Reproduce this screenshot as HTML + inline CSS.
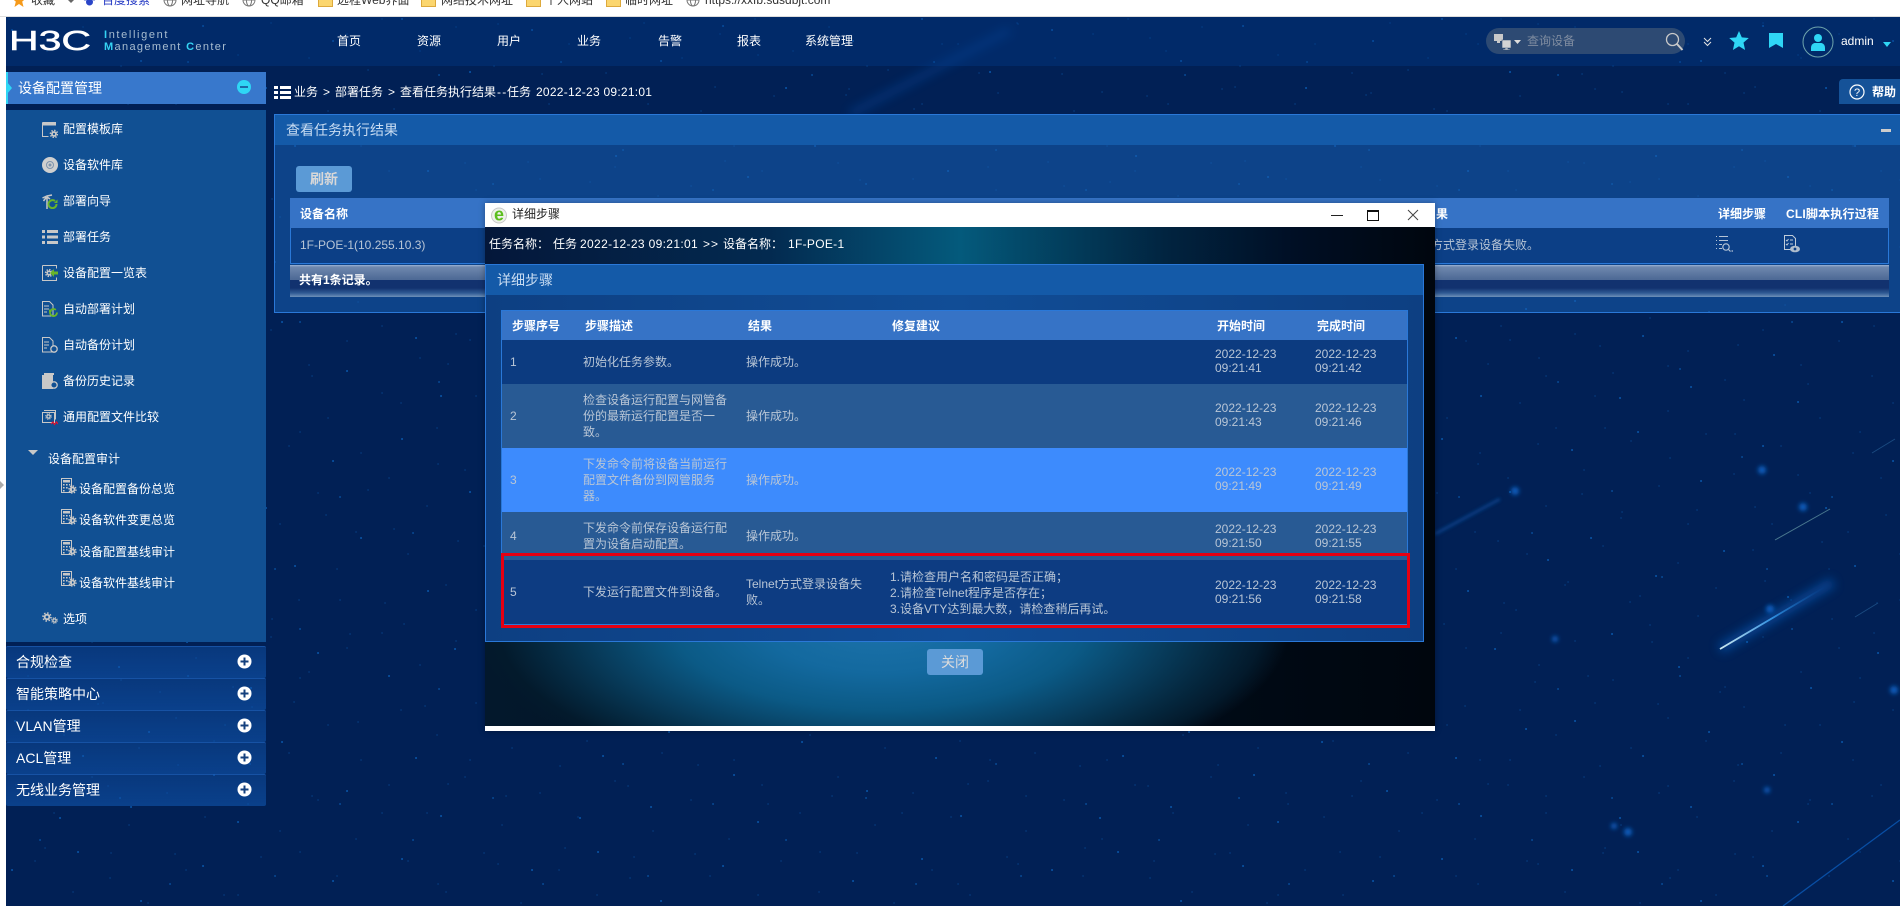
<!DOCTYPE html>
<html lang="zh">
<head>
<meta charset="utf-8">
<title>H3C iMC</title>
<style>
*{box-sizing:border-box;margin:0;padding:0}
html,body{width:1900px;height:906px;overflow:hidden;background:#012055}
body{position:relative;font:12px/16px "Liberation Sans","Noto Sans CJK SC",sans-serif;color:#fff}
.a{position:absolute}
.t{position:absolute;white-space:nowrap;line-height:16px}
.bm{position:absolute;top:-8px;white-space:nowrap;color:#333;line-height:16px}
.nav{position:absolute;top:33px;width:60px;text-align:center;color:#fff}
.side{position:absolute;left:6px;width:260px}
.sub{position:absolute;left:63px;white-space:nowrap;color:#fff}
.sub2{position:absolute;left:79px;white-space:nowrap;color:#fff}
.ic{position:absolute;left:42px;width:16px;height:16px}
.ic2{position:absolute;left:61px;width:16px;height:16px}
.acc{position:absolute;left:6px;width:260px;height:32px;background:linear-gradient(180deg,rgba(20,90,180,.42),rgba(16,86,176,.6));border-top:1px solid rgba(35,100,190,.5);border-radius:2px}
.acc span{position:absolute;left:10px;top:6px;font-size:14px;line-height:18px;color:#fff;white-space:nowrap}
.acc svg{position:absolute;left:231px;top:7px}
.th{position:absolute;font-weight:bold;color:#fff;white-space:nowrap;line-height:16px}
.td{position:absolute;color:#b9c6d6;white-space:nowrap;line-height:16px}
.tm{position:absolute;color:#b9c6d6;white-space:nowrap;line-height:14px}
.row{position:absolute;left:502px;width:905px}
.fd{position:absolute;top:-6px;width:15px;height:13px;background:#fbd66f;border:1px solid #dda93c}
</style>
</head>
<body>
<!-- starfield -->
<svg class="a" style="left:0;top:0" width="1900" height="906" viewBox="0 0 1900 906">
<defs>
<pattern id="st" width="520" height="420" patternUnits="userSpaceOnUse">
<path fill="none" stroke="#0a5cb0" stroke-width="2" stroke-linecap="round" opacity=".85" d="M12 30h.1M78 12h.1M141 61h.1M203 26h.1M266 88h.1M333 41h.1M402 19h.1M470 72h.1M508 140h.1M31 118h.1M96 156h.1M164 131h.1M228 177h.1M295 146h.1M361 118h.1M428 171h.1M52 214h.1M119 247h.1M187 222h.1M251 268h.1M318 233h.1M389 256h.1M455 229h.1M15 301h.1M83 336h.1M149 312h.1M214 355h.1M282 322h.1M347 371h.1M416 338h.1M486 309h.1M60 398h.1M131 387h.1M238 402h.1M441 396h.1"/>
<path fill="none" stroke="#064a94" stroke-width="1.2" stroke-linecap="round" d="M45 8h.1M110 38h.1M175 14h.1M238 55h.1M300 12h.1M368 70h.1M438 44h.1M498 24h.1M22 74h.1M62 92h.1M128 104h.1M195 87h.1M262 122h.1M326 95h.1M394 109h.1M458 121h.1M8 162h.1M70 182h.1M138 196h.1M205 161h.1M272 199h.1M340 180h.1M404 204h.1M476 190h.1M28 256h.1M98 284h.1M160 272h.1M225 305h.1M294 282h.1M358 302h.1M425 286h.1M495 262h.1M40 346h.1M108 366h.1M178 345h.1M248 384h.1M312 376h.1M382 393h.1M448 364h.1M506 376h.1M92 222h.1M300 258h.1M350 214h.1M470 340h.1"/>
</pattern>
<pattern id="st2" width="373" height="307" patternUnits="userSpaceOnUse">
<path fill="none" stroke="#06468e" stroke-width="1.300" stroke-linecap="round" d="M9 19h.1M47 51h.1M83 27h.1M121 66h.1M158 11h.1M196 44h.1M233 73h.1M271 23h.1M309 58h.1M347 34h.1M28 96h.1M64 121h.1M103 89h.1M139 134h.1M176 104h.1M214 127h.1M252 93h.1M289 139h.1M328 111h.1M361 146h.1M16 171h.1M54 199h.1M92 163h.1M129 211h.1M167 179h.1M205 203h.1M242 167h.1M280 217h.1M318 186h.1M356 225h.1M35 247h.1M73 278h.1M111 239h.1M148 289h.1M186 256h.1M224 281h.1M261 243h.1M299 293h.1M337 262h.1M12 296h.1"/>
<path fill="none" stroke="#0a5cb0" stroke-width="1.800" stroke-linecap="round" opacity=".8" d="M66 75h.1M188 62h.1M300 15h.1M120 184h.1M250 150h.1M40 226h.1M340 190h.1M170 270h.1M275 262h.1"/>
</pattern>
<linearGradient id="m1" x1="0" x2="1" y1="0" y2="0"><stop offset="0" stop-color="#cfeaf0"/><stop offset=".5" stop-color="#2f8fe0"/><stop offset="1" stop-color="#0b55aa" stop-opacity="0"/></linearGradient>
<filter id="bl" x="-30%" y="-200%" width="160%" height="500%"><feGaussianBlur stdDeviation="5"/></filter>
<filter id="bl2" x="-30%" y="-200%" width="160%" height="500%"><feGaussianBlur stdDeviation="1.5"/></filter>
<filter id="bl3" x="-100%" y="-100%" width="300%" height="300%"><feGaussianBlur stdDeviation="2"/></filter>
</defs>
<rect width="1900" height="906" fill="#012055"/>
<rect width="1900" height="906" fill="url(#st)"/>
<rect width="1900" height="906" fill="url(#st2)"/>
<path d="M1720 649L1833 582" stroke="#0a62c4" stroke-width="10" opacity=".55" filter="url(#bl)" fill="none"/>
<path d="M1720 649L1825 587" stroke="url(#m1)" stroke-width="1.800" fill="none"/>
<path d="M1775 540L1830 509" stroke="#5d8f9e" stroke-width="1" opacity=".8" fill="none"/>
<path d="M1435 534L1500 499" stroke="#0a4c9a" stroke-width="3" opacity=".7" filter="url(#bl2)" fill="none"/>
<path d="M1872 453L1895 439M1855 617L1878 603" stroke="#1a4a80" stroke-width="1" fill="none"/>
<g fill="#0b5fc0" filter="url(#bl3)"><circle cx="1762" cy="470" r="4"/><circle cx="1803" cy="507" r="4"/><circle cx="1770" cy="609" r="4"/><circle cx="1628" cy="832" r="4"/><circle cx="1614" cy="826" r="3"/><circle cx="1515" cy="491" r="4"/><circle cx="1894" cy="690" r="4"/><circle cx="1555" cy="639" r="3"/><circle cx="1767" cy="790" r="3"/></g>
<path d="M850 114L1010 30" stroke="#0c5cc0" stroke-width="8" opacity=".28" filter="url(#bl)" fill="none"/>
<path d="M1783 906L1900 820" stroke="#0b5ab8" stroke-width="1.300" opacity=".8" fill="none"/>
</svg>

<!-- left strip / browser bar -->
<div class="a" style="left:0;top:0;width:6px;height:906px;background:#fff"></div>
<div class="a" style="left:0;top:481px;width:0;height:0;border-left:4px solid #aaa;border-top:4px solid transparent;border-bottom:4px solid transparent"></div>
<div class="a" style="left:0;top:0;width:1900px;height:17px;background:#fff;border-bottom:1px solid #ddd;overflow:hidden">
<svg class="a" style="left:12px;top:-7px" width="14" height="14" viewBox="0 0 14 14"><path d="M7 0l2 5 5 .4-3.800 3.200L11.500 14 7 11l-4.500 3 1.300-5.400L0 5.400l5-.4z" fill="#f59a1b"/></svg>
<span class="bm" style="left:31px">收藏</span>
<span class="a" style="left:68px;top:0;width:0;height:0;border-left:3px solid transparent;border-right:3px solid transparent;border-top:3px solid #666"></span>
<svg class="a" style="left:83px;top:-7px" width="13" height="14" viewBox="0 0 13 14"><circle cx="6.500" cy="9" r="3.500" fill="#2a45c8"/><circle cx="2" cy="6" r="1.500" fill="#2a45c8"/><circle cx="11" cy="6" r="1.500" fill="#2a45c8"/><circle cx="5" cy="3" r="1.500" fill="#2a45c8"/><circle cx="8.500" cy="3" r="1.500" fill="#2a45c8"/></svg>
<span class="bm" style="left:102px;color:#2439c4">百度搜索</span>
<svg class="a" style="left:163px;top:-7px" width="14" height="14" viewBox="0 0 14 14"><g fill="none" stroke="#777"><circle cx="7" cy="7" r="6"/><ellipse cx="7" cy="7" rx="2.600" ry="6"/><path d="M1 7h12"/></g></svg>
<span class="bm" style="left:181px">网址导航</span>
<svg class="a" style="left:242px;top:-7px" width="14" height="14" viewBox="0 0 14 14"><g fill="none" stroke="#777"><circle cx="7" cy="7" r="6"/><ellipse cx="7" cy="7" rx="2.600" ry="6"/><path d="M1 7h12"/></g></svg>
<span class="bm" style="left:261px">QQ邮箱</span>
<span class="fd" style="left:318px"></span>
<span class="bm" style="left:337px">远程Web界面</span>
<span class="fd" style="left:421px"></span>
<span class="bm" style="left:441px">网络技术网址</span>
<span class="fd" style="left:526px"></span>
<span class="bm" style="left:545px">个人网站</span>
<span class="fd" style="left:606px"></span>
<span class="bm" style="left:625px">临时网址</span>
<svg class="a" style="left:686px;top:-7px" width="14" height="14" viewBox="0 0 14 14"><g fill="none" stroke="#777"><circle cx="7" cy="7" r="6"/><ellipse cx="7" cy="7" rx="2.600" ry="6"/><path d="M1 7h12"/></g></svg>
<span class="bm" style="left:705px">https://xxfb.sdsdbjt.com</span>
</div>

<!-- top bar -->
<div class="a" style="left:6px;top:17px;width:1894px;height:49px;background:rgba(2,60,140,.38)"></div>
<svg class="a" style="left:8px;top:26px" width="86" height="28" viewBox="0 0 86 28"><text x="1" y="24" font-family="Liberation Sans" font-size="28" fill="#fff" stroke="#fff" stroke-width=".5" textLength="82" lengthAdjust="spacingAndGlyphs">H3C</text></svg>
<div class="t" style="left:104px;top:27px;font-size:11px;color:#a8bdd0;letter-spacing:1.630px"><span style="color:#35d3f3;font-weight:bold">I</span>ntelligent</div>
<div class="t" style="left:104px;top:39px;font-size:11px;color:#a8bdd0;letter-spacing:1.350px"><span style="color:#35d3f3;font-weight:bold">M</span>anagement <span style="color:#35d3f3;font-weight:bold">C</span>enter</div>
<div class="nav" style="left:319px">首页</div>
<div class="nav" style="left:399px">资源</div>
<div class="nav" style="left:479px">用户</div>
<div class="nav" style="left:559px">业务</div>
<div class="nav" style="left:640px">告警</div>
<div class="nav" style="left:719px">报表</div>
<div class="nav" style="left:799px">系统管理</div>

<!-- search etc -->
<div class="a" style="left:1486px;top:28px;width:199px;height:26px;border-radius:13px;background:#2d4a73"></div>
<svg class="a" style="left:1493px;top:33px" width="30" height="18" viewBox="0 0 30 18"><path d="M1 1h9v7H1zM4 8h3v2H4z" fill="#c9c9c9"/><path d="M9 7h9v8H9zM12 15h3v1h2v1h-7v-1h2z" fill="#d4d4d4" stroke="#2d4a73" stroke-width=".6"/><path d="M21 7h7l-3.500 4z" fill="#ddd"/></svg>
<div class="t" style="left:1527px;top:33px;color:#7f8ca0">查询设备</div>
<svg class="a" style="left:1665px;top:32px" width="19" height="19" viewBox="0 0 19 19"><circle cx="7.500" cy="7.500" r="6" fill="none" stroke="#c9c9c9" stroke-width="1.300"/><path d="M12 12l5.500 6" stroke="#c9c9c9" stroke-width="2"/></svg>
<svg class="a" style="left:1702px;top:37px" width="11" height="10" viewBox="0 0 11 10"><path d="M2 1l3.500 3.500L9 1M2 5l3.500 3.500L9 5" fill="none" stroke="#e4e4e4" stroke-width="1"/></svg>
<svg class="a" style="left:1729px;top:31px" width="20" height="19" viewBox="0 0 20 19"><path d="M10 0l2.800 6.400 7 .6-5.300 4.600L16.100 19 10 15.200 3.900 19l1.600-7.400L.2 7l7-.6z" fill="#2fd6f5"/></svg>
<svg class="a" style="left:1769px;top:33px" width="14" height="15" viewBox="0 0 14 15"><path d="M0 0h14v15L7 11l-7 4z" fill="#2fd6f5"/></svg>
<svg class="a" style="left:1802px;top:26px" width="32" height="32" viewBox="0 0 32 32"><circle cx="16" cy="16" r="15" fill="none" stroke="#6fa5ad" stroke-width="1"/><circle cx="16" cy="12" r="4" fill="#2fd6f5"/><path d="M9 25v-3c0-4 3-5 4-5h6c1 0 4 1 4 5v3z" fill="#2fd6f5"/></svg>
<div class="t" style="left:1841px;top:33px;color:#fff">admin</div>
<div class="a" style="left:1883px;top:42px;width:0;height:0;border-left:4px solid transparent;border-right:4px solid transparent;border-top:5px solid #2fd6f5"></div>

<!-- help -->
<div class="a" style="left:1839px;top:79px;width:61px;height:25px;background:#155298;border-top-left-radius:4px"></div>
<svg class="a" style="left:1849px;top:84px" width="16" height="16" viewBox="0 0 16 16"><circle cx="8" cy="8" r="7" fill="none" stroke="#fff" stroke-width="1.200"/><text x="8" y="12" font-family="Liberation Sans" font-size="11" text-anchor="middle" fill="#fff">?</text></svg>
<div class="t" style="left:1872px;top:84px;font-weight:bold">帮助</div>

<!-- breadcrumb -->
<svg class="a" style="left:274px;top:86px" width="17" height="13" viewBox="0 0 17 13"><path d="M0 0h4v3H0zM6 0h11v3H6zM0 5h4v3H0zM6 5h11v3H6zM0 10h4v3H0zM6 10h11v3H6z" fill="#fff"/></svg>
<div class="t" style="left:294px;top:84px">业务</div>
<div class="t" style="left:323px;top:84px">&gt;</div>
<div class="t" style="left:335px;top:84px">部署任务</div>
<div class="t" style="left:388px;top:84px">&gt;</div>
<div class="t" style="left:400px;top:84px">查看任务执行结果</div>
<div class="t" style="left:497px;top:84px;letter-spacing:1.200px">--</div>
<div class="t" style="left:507px;top:84px">任务</div>
<div class="t" style="left:536px;top:84px;letter-spacing:.25px">2022-12-23 09:21:01</div>

<!-- sidebar -->
<div class="side" style="top:72px;height:32px;background:#3878cc"></div>
<div class="a" style="left:6px;top:72px;width:2px;height:32px;background:#2fd6f5"></div>
<div class="a" style="left:7px;top:82px;width:0;height:0;border-left:5px solid #2fd6f5;border-top:6px solid transparent;border-bottom:6px solid transparent"></div>
<div class="t" style="left:18px;top:80px;font-size:14px">设备配置管理</div>
<svg class="a" style="left:237px;top:80px" width="14" height="14" viewBox="0 0 14 14"><circle cx="7" cy="7" r="7" fill="#2fd6f5"/><path d="M3 6h8v2H3z" fill="#1d6aa8"/></svg>
<div class="side" style="top:110px;height:532px;background:#115093"></div>

<svg width="0" height="0" class="a">
<defs>
<symbol id="g" viewBox="0 0 10 10"><circle cx="5" cy="5" r="2.300" fill="none" stroke="#c8c8c8" stroke-width="1.800"/><circle cx="5" cy="5" r="4" fill="none" stroke="#c8c8c8" stroke-width="1.600" stroke-dasharray="1.500 1.640"/></symbol>
<symbol id="cal" viewBox="0 0 16 16"><path d="M.5.5h10v14H.5z" fill="#115093" stroke="#c8c8c8"/><path d="M2 2h7v2.500H2zM2 6h1.600v1.500H2zM5 6h1.600v1.500H5zM8 6h1.200v1.500H8zM2 9h1.600v1.500H2zM2 12h1.600v1.500H2zM5 9h1.600v1.500H5z" fill="#c8c8c8"/><circle cx="11.500" cy="11.500" r="2" fill="none" stroke="#c8c8c8" stroke-width="1.700"/><circle cx="11.500" cy="11.500" r="3.500" fill="none" stroke="#c8c8c8" stroke-width="1.500" stroke-dasharray="1.400 1.350"/></symbol>
<symbol id="doc" viewBox="0 0 16 16"><path d="M.5.500h7l3.500 3.500v11H.5z" fill="none" stroke="#c8c8c8"/><path d="M2 5h5M2 8h5M2 11h3" stroke="#c8c8c8"/></symbol>
</defs>
</svg>

<svg class="ic" style="top:122px" viewBox="0 0 16 16"><path d="M.5.500h13v3M.5.500v14h6" fill="none" stroke="#c8c8c8"/><path d="M1 1h12v2.500H1z" fill="#c8c8c8"/><circle cx="12" cy="12" r="2" fill="none" stroke="#c8c8c8" stroke-width="1.800"/><circle cx="12" cy="12" r="3.600" fill="none" stroke="#c8c8c8" stroke-width="1.500" stroke-dasharray="1.400 1.430"/></svg>
<div class="sub" style="top:121px">配置模板库</div>
<svg class="ic" style="top:157px" viewBox="0 0 16 16"><circle cx="8" cy="8" r="8" fill="#cfcfcf"/><circle cx="8" cy="8" r="3.500" fill="none" stroke="#7d93ad" stroke-width="1"/><circle cx="8" cy="8" r="1.500" fill="#7d93ad"/></svg>
<div class="sub" style="top:157px">设备软件库</div>
<svg class="ic" style="top:193px" viewBox="0 0 16 16"><path d="M5 16V4M.5 5L5 3l5-1M1.500 8l3-4M8 6L5 4" stroke="#c8c8c8" stroke-width="1.500" fill="none"/><path d="M14.500 11a4 4 0 1 1-1.500-3" fill="none" stroke="#69b52a" stroke-width="2"/><path d="M15.500 6.500v3.500h-3.500z" fill="#69b52a"/></svg>
<div class="sub" style="top:193px">部署向导</div>
<svg class="ic" style="top:229px" viewBox="0 0 16 16"><path d="M0 1h3v3H0zM5 1h11v3H5zM0 6.500h3v3H0zM5 6.500h11v3H5zM0 12h3v3H0zM5 12h11v3H5z" fill="#c8c8c8"/></svg>
<div class="sub" style="top:229px">部署任务</div>
<svg class="ic" style="top:265px" viewBox="0 0 16 16"><path d="M.5.500h14v3M.5.500v15h14v-3" fill="none" stroke="#c8c8c8"/><circle cx="7" cy="8" r="1.800" fill="none" stroke="#c8c8c8" stroke-width="1.600"/><circle cx="7" cy="8" r="3.400" fill="none" stroke="#c8c8c8" stroke-width="1.500" stroke-dasharray="1.400 1.270"/><path d="M16 6.500v3h-4v2.500l-4-4 4-4v2.500z" fill="#69b52a"/></svg>
<div class="sub" style="top:265px">设备配置一览表</div>
<svg class="ic" style="top:301px" viewBox="0 0 16 16"><use href="#doc"/><path d="M15 11.500a3.500 3.500 0 1 1-1.200-2.600" fill="none" stroke="#69b52a" stroke-width="1.800"/><path d="M7 8v3h3z" fill="#69b52a"/></svg>
<div class="sub" style="top:301px">自动部署计划</div>
<svg class="ic" style="top:337px" viewBox="0 0 16 16"><use href="#doc"/><circle cx="12" cy="12" r="3.200" fill="#115093" stroke="#c8c8c8" stroke-width="1.300"/></svg>
<div class="sub" style="top:337px">自动备份计划</div>
<svg class="ic" style="top:373px" viewBox="0 0 16 16"><path d="M0 2h11v14H0z" fill="#c8c8c8"/><path d="M2 0h10v2H2z" fill="#c8c8c8"/><circle cx="12" cy="12" r="3.200" fill="#115093" stroke="#c8c8c8" stroke-width="1.300"/></svg>
<div class="sub" style="top:373px">备份历史记录</div>
<svg class="ic" style="top:410px" viewBox="0 0 16 16"><path d="M.5 2.500h12v10H.5z" fill="none" stroke="#c8c8c8"/><path d="M2 .500h11.500v9" fill="none" stroke="#c8c8c8"/><use href="#g" x="3" y="3" width="7" height="7"/><path d="M9 14l2-2 1.500 2.500 2-2.500 1.500 2" fill="none" stroke="#e8102a" stroke-width="1.200"/></svg>
<div class="sub" style="top:409px">通用配置文件比较</div>

<div class="a" style="left:28px;top:450px;width:0;height:0;border-left:5px solid transparent;border-right:5px solid transparent;border-top:5px solid #c8c8c8"></div>
<div class="t" style="left:48px;top:451px">设备配置审计</div>
<svg class="ic2" style="top:478px"><use href="#cal" width="16" height="16"/></svg>
<div class="sub2" style="top:481px">设备配置备份总览</div>
<svg class="ic2" style="top:509px"><use href="#cal" width="16" height="16"/></svg>
<div class="sub2" style="top:512px">设备软件变更总览</div>
<svg class="ic2" style="top:540px"><use href="#cal" width="16" height="16"/></svg>
<div class="sub2" style="top:544px">设备配置基线审计</div>
<svg class="ic2" style="top:571px"><use href="#cal" width="16" height="16"/></svg>
<div class="sub2" style="top:575px">设备软件基线审计</div>
<svg class="a" style="left:42px;top:610px" width="16" height="16" viewBox="0 0 16 16"><use href="#g" x="0" y="2" width="10" height="10"/><use href="#g" x="9" y="7" width="7" height="7"/></svg>
<div class="sub" style="top:611px">选项</div>

<div class="acc" style="top:646px"><span>合规检查</span><svg width="15" height="15" viewBox="0 0 15 15"><circle cx="7.500" cy="7.500" r="7" fill="#fff"/><path d="M3.500 6.500h8v2h-8zM6.500 3.500h2v8h-2z" fill="#14407e"/></svg></div>
<div class="acc" style="top:678px"><span>智能策略中心</span><svg width="15" height="15" viewBox="0 0 15 15"><circle cx="7.500" cy="7.500" r="7" fill="#fff"/><path d="M3.500 6.500h8v2h-8zM6.500 3.500h2v8h-2z" fill="#14407e"/></svg></div>
<div class="acc" style="top:710px"><span>VLAN管理</span><svg width="15" height="15" viewBox="0 0 15 15"><circle cx="7.500" cy="7.500" r="7" fill="#fff"/><path d="M3.500 6.500h8v2h-8zM6.500 3.500h2v8h-2z" fill="#14407e"/></svg></div>
<div class="acc" style="top:742px"><span>ACL管理</span><svg width="15" height="15" viewBox="0 0 15 15"><circle cx="7.500" cy="7.500" r="7" fill="#fff"/><path d="M3.500 6.500h8v2h-8zM6.500 3.500h2v8h-2z" fill="#14407e"/></svg></div>
<div class="acc" style="top:774px"><span>无线业务管理</span><svg width="15" height="15" viewBox="0 0 15 15"><circle cx="7.500" cy="7.500" r="7" fill="#fff"/><path d="M3.500 6.500h8v2h-8zM6.500 3.500h2v8h-2z" fill="#14407e"/></svg></div>

<!-- main panel -->
<div class="a" style="left:274px;top:114px;width:1626px;height:199px;background:rgba(24,96,180,.55);border:1px solid #2a78d8;border-right:0"></div>
<div class="a" style="left:275px;top:115px;width:1625px;height:30px;background:#145aa8"></div>
<div class="t" style="left:286px;top:122px;font-size:14px;color:#c8dcf2">查看任务执行结果</div>
<div class="a" style="left:1881px;top:129px;width:10px;height:3px;background:#ccc"></div>
<div class="a" style="left:296px;top:166px;width:56px;height:26px;background:#5b9ad6;border-radius:3px;text-align:center;font-size:14px;font-weight:bold;line-height:26px;color:#d8d8d8">刷新</div>

<div class="a" style="left:290px;top:198px;width:1599px;height:66px;border:1px solid #2a78d8;border-top:0;background:#0c3f86"></div>
<div class="a" style="left:290px;top:198px;width:1599px;height:30px;background:#3673c6"></div>
<div class="th" style="left:300px;top:206px">设备名称</div>
<div class="td" style="left:300px;top:237px">1F-POE-1(10.255.10.3)</div>
<div class="th" style="left:1436px;top:206px">果</div>
<div class="td" style="left:1431px;top:237px">方式登录设备失败。</div>
<div class="th" style="left:1718px;top:206px">详细步骤</div>
<div class="th" style="left:1786px;top:206px;letter-spacing:.2px">CLI脚本执行过程</div>
<svg class="a" style="left:1716px;top:235px" width="17" height="18" viewBox="0 0 17 18"><path d="M.5 1v1M.5 5v1M.5 9v1M.5 13v1M3 1.500h9M3 5.500h9M3 9.500h3M3 13.500h3" stroke="#b5c4d6" fill="none"/><circle cx="10" cy="12" r="3.200" fill="none" stroke="#b5c4d6" stroke-width="1.200"/><path d="M12.500 14.500l2 2M15.500 16h1.500" stroke="#b5c4d6" stroke-width="1.200"/></svg>
<svg class="a" style="left:1784px;top:235px" width="17" height="18" viewBox="0 0 17 18"><path d="M.5.500h8l3 3v11H.5z" fill="none" stroke="#c0ccd9"/><path d="M2 5l1 1 1.500-2M6 5h3M2 9l1 1 1.500-2M6 9h3" stroke="#c0ccd9" fill="none"/><ellipse cx="11" cy="14" rx="5" ry="3.300" fill="#aebccc"/><circle cx="11" cy="14" r="1.400" fill="#0c3f86"/></svg>
<div class="a" style="left:290px;top:265px;width:1599px;height:32px;background:linear-gradient(180deg,#9db4d4 0,#6f88ae 2px,#4e6a96 14px,#4e6a96 15px,#12326f 15px,#12326f 23px,#2f5a94 28px,#6e90b8 32px)"></div>
<div class="t" style="left:299px;top:272px;font-weight:bold">共有1条记录。</div>

<!-- dialog -->
<div class="a" style="left:485px;top:203px;width:950px;height:528px;background:#fff;box-shadow:0 0 6px rgba(0,0,0,.35)"></div>
<svg class="a" style="left:491px;top:207px" width="16" height="17" viewBox="0 0 16 17"><circle cx="8" cy="8.500" r="7.500" fill="#eef2ea" stroke="#c9c9c9"/><text x="8" y="13.500" font-family="Liberation Sans" font-size="18" font-weight="bold" text-anchor="middle" fill="#5cbe1e">e</text></svg>
<div class="t" style="left:512px;top:206px;color:#222">详细步骤</div>
<div class="a" style="left:1331px;top:215px;width:12px;height:1px;background:#222"></div>
<div class="a" style="left:1367px;top:210px;width:12px;height:11px;border:1px solid #111;border-top-width:2px"></div>
<svg class="a" style="left:1407px;top:209px" width="12" height="12" viewBox="0 0 12 12"><path d="M1 1l10 10M11 1L1 11" stroke="#444" stroke-width="1"/></svg>

<div class="a" style="left:485px;top:227px;width:950px;height:499px;background:radial-gradient(ellipse 410px 165px at 395px 400px,#1c72aa 0,#13699f 28%,#0b5a86 50%,#083f60 68%,#052a42 82%,#031a2c 93%,rgba(3,24,44,0) 100%),linear-gradient(90deg,#03182c,#010f1f 50%,#00060e)"></div>
<div class="a" style="left:485px;top:227px;width:950px;height:37px;background:linear-gradient(90deg,#04173a 0,#032a50 30%,#045a7c 50%,#034a6a 56%,#01233f 72%,#000f25 85%,#00060e 100%)"></div>
<div class="t" style="left:489px;top:236px">任务名称：</div>
<div class="t" style="left:553px;top:236px">任务</div>
<div class="t" style="left:580px;top:236px;letter-spacing:.35px">2022-12-23 09:21:01</div>
<div class="t" style="left:703px;top:236px;letter-spacing:1px">&gt;&gt;</div>
<div class="t" style="left:723px;top:236px">设备名称：</div>
<div class="t" style="left:788px;top:236px;letter-spacing:.3px">1F-POE-1</div>

<div class="a" style="left:485px;top:264px;width:939px;height:378px;background:linear-gradient(90deg,#0d3f82,#114d96 50%,#0d3f82);border:1px solid #2a78d8"></div>
<div class="a" style="left:486px;top:265px;width:937px;height:30px;background:#145aa8"></div>
<div class="t" style="left:497px;top:272px;font-size:14px;color:#c8dcf2">详细步骤</div>

<div class="row" style="top:310px;height:30px;background:#3673c6;border-top:1px solid #2a78d8"></div>
<div class="row" style="top:340px;height:44px;background:#0c3b80"></div>
<div class="row" style="top:384px;height:64px;background:#285a94"></div>
<div class="row" style="top:448px;height:64px;background:#3d8bfd"></div>
<div class="row" style="top:512px;height:48px;background:#285a94"></div>
<div class="row" style="top:560px;height:64px;background:#0d3c82"></div>
<div class="a" style="left:501px;top:310px;width:1px;height:315px;background:#2a78d8"></div>
<div class="a" style="left:1407px;top:310px;width:1px;height:315px;background:#2a78d8"></div>
<div class="a" style="left:501px;top:624px;width:907px;height:1px;background:#2a78d8"></div>

<div class="th" style="left:512px;top:318px">步骤序号</div>
<div class="th" style="left:585px;top:318px">步骤描述</div>
<div class="th" style="left:748px;top:318px">结果</div>
<div class="th" style="left:892px;top:318px">修复建议</div>
<div class="th" style="left:1217px;top:318px">开始时间</div>
<div class="th" style="left:1317px;top:318px">完成时间</div>

<div class="td" style="left:510px;top:354px">1</div>
<div class="td" style="left:583px;top:354px">初始化任务参数。</div>
<div class="td" style="left:746px;top:354px">操作成功。</div>
<div class="tm" style="left:1215px;top:347px">2022-12-23<br>09:21:41</div>
<div class="tm" style="left:1315px;top:347px">2022-12-23<br>09:21:42</div>

<div class="td" style="left:510px;top:408px">2</div>
<div class="td" style="left:583px;top:392px">检查设备运行配置与网管备<br>份的最新运行配置是否一<br>致。</div>
<div class="td" style="left:746px;top:408px">操作成功。</div>
<div class="tm" style="left:1215px;top:401px">2022-12-23<br>09:21:43</div>
<div class="tm" style="left:1315px;top:401px">2022-12-23<br>09:21:46</div>

<div class="td" style="left:510px;top:472px">3</div>
<div class="td" style="left:583px;top:456px">下发命令前将设备当前运行<br>配置文件备份到网管服务<br>器。</div>
<div class="td" style="left:746px;top:472px">操作成功。</div>
<div class="tm" style="left:1215px;top:465px">2022-12-23<br>09:21:49</div>
<div class="tm" style="left:1315px;top:465px">2022-12-23<br>09:21:49</div>

<div class="td" style="left:510px;top:528px">4</div>
<div class="td" style="left:583px;top:520px">下发命令前保存设备运行配<br>置为设备启动配置。</div>
<div class="td" style="left:746px;top:528px">操作成功。</div>
<div class="tm" style="left:1215px;top:522px">2022-12-23<br>09:21:50</div>
<div class="tm" style="left:1315px;top:522px">2022-12-23<br>09:21:55</div>

<div class="td" style="left:510px;top:584px">5</div>
<div class="td" style="left:583px;top:584px">下发运行配置文件到设备。</div>
<div class="td" style="left:746px;top:576px">Telnet方式登录设备失<br>败。</div>
<div class="td" style="left:890px;top:569px">1.请检查用户名和密码是否正确；<br>2.请检查Telnet程序是否存在；<br>3.设备VTY达到最大数，请检查稍后再试。</div>
<div class="tm" style="left:1215px;top:578px">2022-12-23<br>09:21:56</div>
<div class="tm" style="left:1315px;top:578px">2022-12-23<br>09:21:58</div>

<div class="a" style="left:501px;top:553px;width:909px;height:75px;border:3px solid #e60012"></div>

<div class="a" style="left:927px;top:649px;width:56px;height:26px;background:#5b9ad6;border-radius:3px;text-align:center;font-size:14px;line-height:26px;color:#dcdcdc">关闭</div>
</body>
</html>
